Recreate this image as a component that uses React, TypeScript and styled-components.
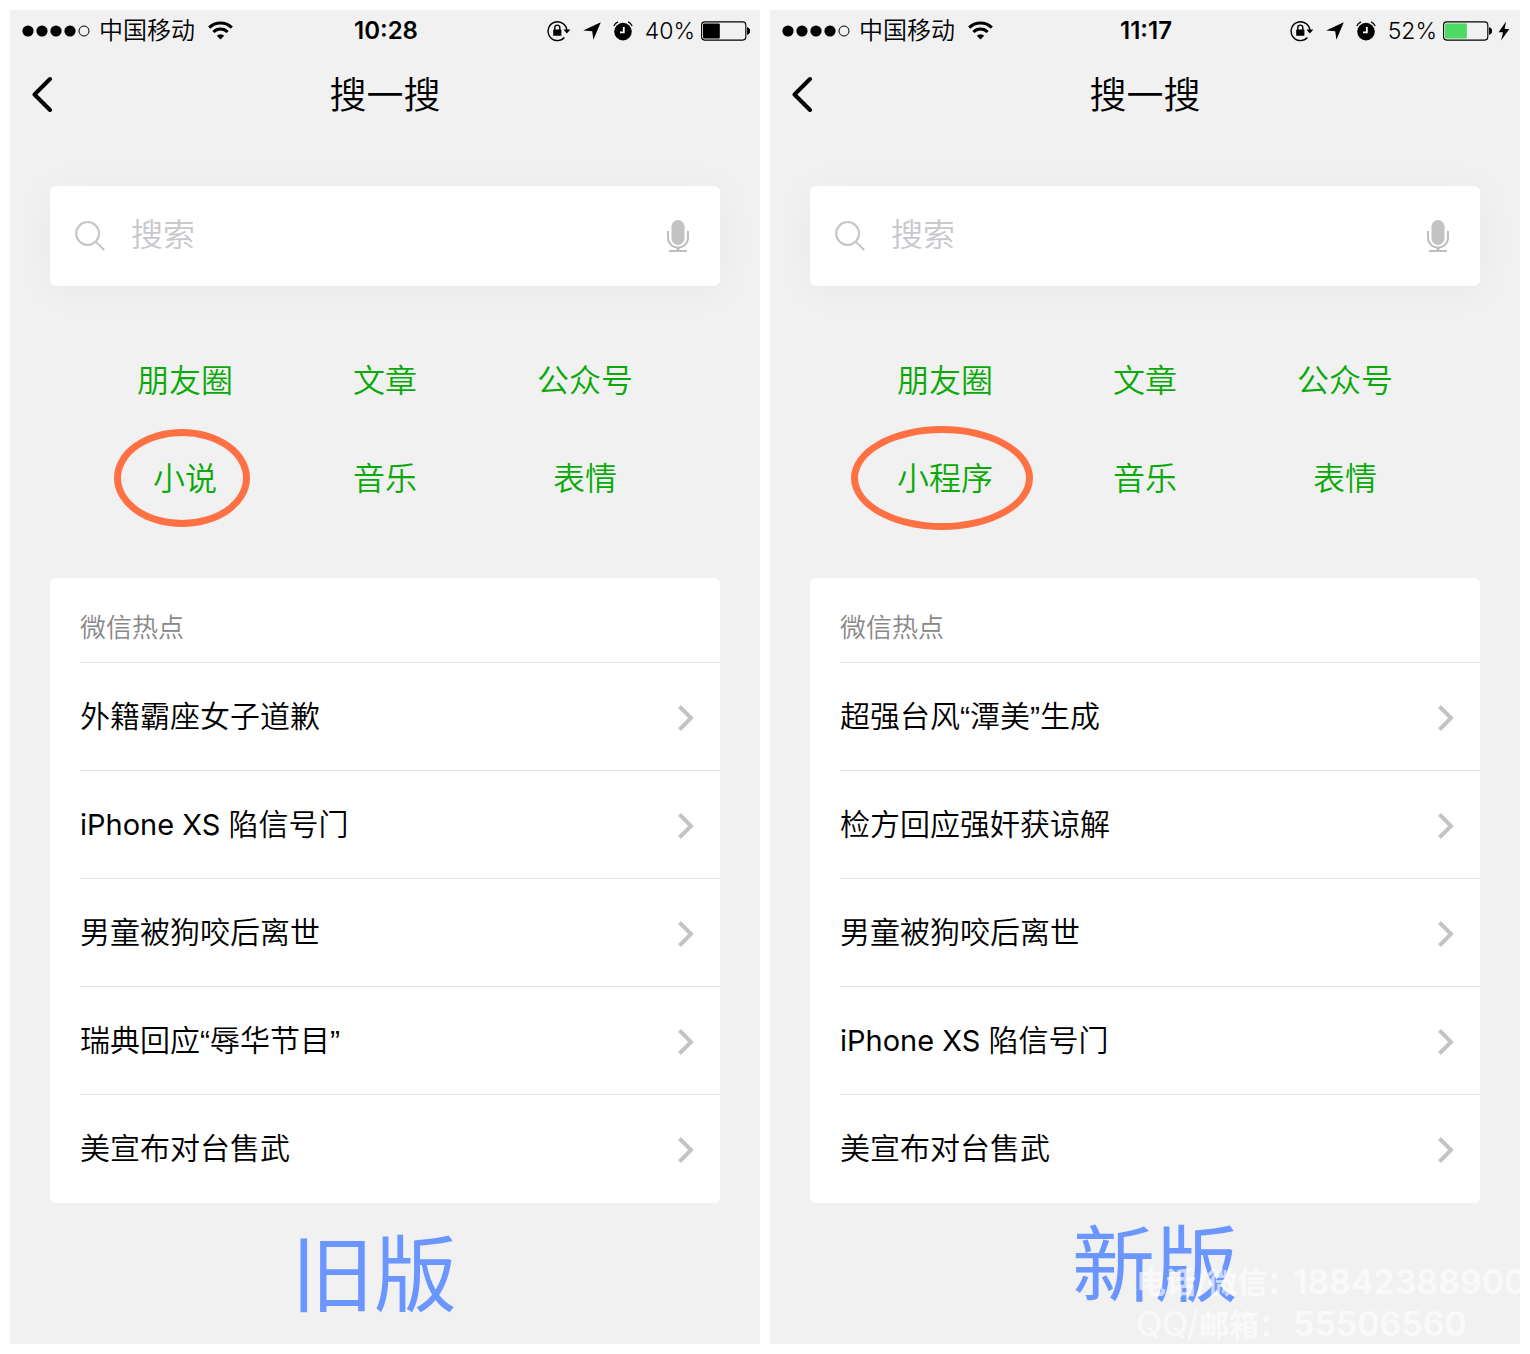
import React from "react";
import styled, { createGlobalStyle } from "styled-components";

const GlobalStyle = createGlobalStyle`
  *, *::before, *::after { box-sizing: border-box; }
  body {
    margin: 0;
    background: #fff;
    color: #000;
    font-family: Inter, "Noto Sans CJK SC", sans-serif;
    font-weight: 350;
  }
  a { color: inherit; text-decoration: none; }
  button { padding: 0; border: 0; background: none; font: inherit; color: inherit; cursor: pointer; }
  svg { display: block; flex: none; }
`;

const Page = styled.main`
  display: grid;
  grid-template-columns: 1fr 1fr;
  gap: 10px;
  min-height: 100vh;
  padding: 10px;
`;

const Phone = styled.section`
  position: relative;
  display: flex;
  flex-direction: column;
  min-width: 0;
  overflow: hidden;
  background: #f1f1f1;
`;

const StatusBar = styled.div`
  display: grid;
  grid-template-columns: 1fr auto 1fr;
  align-items: center;
  height: 40px;
  padding: 2px 10px 0 12px;
  font-size: 24px;
  line-height: 36px;
`;

const StatusLeft = styled.div`
  display: flex;
  align-items: center;
`;

const Carrier = styled.span`
  margin: 0 13px 0 9px;
`;

const Clock = styled.time`
  font-weight: 600;
  font-size: 24px;
`;

const StatusRight = styled.div`
  display: flex;
  align-items: center;
  justify-content: flex-end;
  gap: 12px;
`;

const Power = styled.div`
  display: flex;
  align-items: center;
  gap: 6px;
  font-size: 23px;
`;

const NavBar = styled.header`
  display: grid;
  grid-template-columns: 64px 1fr 64px;
  align-items: center;
  height: 88px;
`;

const BackButton = styled.button`
  display: flex;
  align-items: center;
  height: 88px;
  padding-left: 20px;
`;

const Title = styled.h1`
  margin: 0;
  padding-top: 4px;
  font-size: 37px;
  line-height: 48px;
  font-weight: inherit;
  text-align: center;
`;

const SearchBox = styled.form`
  display: flex;
  align-items: center;
  height: 100px;
  margin: 48px 40px 0;
  padding: 0 30px 0 25px;
  border-radius: 6px;
  background: #fff;
  box-shadow: 0 4px 40px rgba(0, 0, 0, 0.04);
`;

const SearchLabel = styled.label`
  display: flex;
  flex: 1;
  align-items: center;
  gap: 25px;
  min-width: 0;
`;

const SearchInput = styled.input`
  flex: 1;
  min-width: 0;
  height: 48px;
  padding: 0 0 3px;
  border: 0;
  outline: 0;
  background: none;
  font: inherit;
  font-size: 32px;
  &::placeholder { color: #c7c7cc; opacity: 1; }
`;

const Categories = styled.nav`
  display: grid;
  grid-template-columns: repeat(3, 1fr);
  grid-auto-rows: 98px;
  margin: 45px 75px 51px;
`;

const Category = styled.a`
  position: relative;
  display: flex;
  align-items: center;
  justify-content: center;
  padding-top: 2px;
  color: #09a909;
  font-size: 32px;
  line-height: 48px;
`;

const Ring = styled.span<{ $width: number; $height: number }>`
  position: absolute;
  top: 50%;
  left: calc(50% - 3px);
  width: ${(p) => p.$width}px;
  height: ${(p) => p.$height}px;
  border: 7px solid #ff7043;
  border-radius: 50%;
  transform: translate(-50%, -50%);
`;

const Card = styled.section`
  margin: 0 40px;
  padding: 0 0 1px 30px;
  border-radius: 6px;
  background: #fff;
`;

const CardTitle = styled.h2`
  margin: 0;
  padding: 30px 0 14px;
  color: #888;
  font-size: 26px;
  line-height: 40px;
  font-weight: inherit;
`;

const TopicList = styled.ul`
  margin: 0;
  padding: 0;
  list-style: none;
`;

const Topic = styled.li`
  border-top: 1px solid #e2e2e2;
`;

const TopicLink = styled.a`
  display: flex;
  align-items: center;
  justify-content: space-between;
  height: 107px;
  padding-right: 26px;
  font-family: "Liberation Sans", "Noto Sans CJK SC", sans-serif;
  font-size: 30px;
  line-height: 48px;
`;

const Latin = styled.span`
  font-family: Inter, sans-serif;
  font-size: 29px;
  font-weight: 400;
`;

const Caption = styled.p<{ $raised?: boolean }>`
  margin: 0;
  padding: ${(p) => (p.$raised ? "12px 0 0 20px" : "22px 22px 0 0")};
  color: #6b96ff;
  font-size: 83px;
  line-height: 100px;
  font-weight: 400;
  text-align: center;
`;

const Watermark = styled.div`
  position: absolute;
  left: 366px;
  bottom: -2px;
  display: grid;
  grid-template-columns: 157px auto;
  color: rgba(255, 255, 255, 0.65);
  font-size: 34px;
  font-weight: 600;
  line-height: 42px;
  white-space: nowrap;
`;

const WatermarkLabel = styled.span`
  font-size: 30px;
`;

const WatermarkLatin = styled.span`
  font-size: 34px;
  font-weight: 400;
`;

const SignalDots = () => (
  <svg width="68" height="12" viewBox="0 0 68 12" aria-hidden="true">
    {[6, 20, 34, 48].map((x) => (
      <circle key={x} cx={x} cy="6" r="5.6" />
    ))}
    <circle cx="62" cy="6" r="5" fill="none" stroke="#000" />
  </svg>
);

const WifiIcon = () => (
  <svg width="25" height="20" viewBox="0 0 25 20" fill="none" stroke="#000" strokeWidth="3" aria-hidden="true">
    <path d="M1.2 6.600a16 16 0 0 1 22.6 0" />
    <path d="M5.4 11a10 10 0 0 1 14.2 0" />
    <path d="M8.8 14.8a5.2 5.2 0 0 1 7.4 0L12.5 18.6Z" fill="#000" stroke="none" />
  </svg>
);

const RotationLockIcon = () => (
  <svg width="24" height="22" viewBox="0 0 24 22" fill="none" stroke="#000" aria-hidden="true">
    <path d="M17.4 17.6A9.4 9.4 0 1 1 19.9 10.5" strokeWidth="1.4" />
    <path d="M16.4 9.6h7l-3.5 4Z" fill="#000" stroke="none" />
    <rect x="6.2" y="9.4" width="8.2" height="6.4" rx="0.6" fill="#000" stroke="none" />
    <path d="M7.8 10V7.6a2.5 2.5 0 0 1 5 0V10" strokeWidth="1.4" />
  </svg>
);

const LocationIcon = () => (
  <svg width="18" height="18" viewBox="0 0 18 18" aria-hidden="true">
    <path d="M17.8 0.2 10.400 17.8 9.200 9.200 0.2 8.400Z" />
  </svg>
);

const AlarmIcon = () => (
  <svg width="20" height="20" viewBox="0 0 20 20" aria-hidden="true">
    <circle cx="10" cy="10.600" r="8.8" />
    <path d="M0.8 5A8 8 0 0 1 5 0.900M19.2 5A8 8 0 0 0 15 0.900" fill="none" stroke="#000" strokeWidth="1.2" />
    <path d="M10.8 6V11.4H7" fill="none" stroke="#fff" strokeWidth="1.8" />
  </svg>
);

const BatteryIcon = ({ level, color }: { level: number; color: string }) => (
  <svg width="49" height="20" viewBox="0 0 49 20" aria-hidden="true">
    <rect x="0.6" y="0.9" width="44.2" height="18.2" rx="3" fill="none" stroke="#000" strokeWidth="1.1" />
    <rect x="2" y="2.5" width={level * 0.42} height="15" rx="1" fill={color} />
    <path d="M46.4 6.6a3.6 3.6 0 0 1 0 6.8Z" stroke="#000" />
  </svg>
);

const BoltIcon = () => (
  <svg width="12" height="20" viewBox="0 0 12 20" aria-hidden="true">
    <path d="M8 0.600 0.6 11.200H5L3.2 19.200 11.400 8H6.6Z" />
  </svg>
);

const BackIcon = () => (
  <svg width="24" height="36" viewBox="0 0 24 36" fill="none" stroke="#000" strokeWidth="4" strokeLinecap="round" strokeLinejoin="round" aria-hidden="true">
    <path d="M20 3 4.500 18.500 20 34" />
  </svg>
);

const SearchIcon = () => (
  <svg width="31" height="30" viewBox="0 0 31 30" fill="none" stroke="#c4c4c6" strokeWidth="2" aria-hidden="true">
    <circle cx="12.600" cy="12.500" r="11.400" />
    <path d="m20.700 20.600 8.500 8.400" />
  </svg>
);

const MicIcon = () => (
  <svg width="24" height="34" viewBox="0 0 24 34" fill="none" stroke="#bfbfbf" strokeWidth="2" aria-hidden="true">
    <rect x="5.500" y="1" width="13" height="25" rx="6.500" fill="#c3c3c3" stroke="none" />
    <path d="M2 12v7a10 9.500 0 0 0 20 0v-7" />
    <path d="M12 28v4" strokeWidth="3" />
    <path d="M3 32h18" />
  </svg>
);

const ChevronIcon = () => (
  <svg width="17" height="28" viewBox="0 0 17 28" fill="none" stroke="#c4c4c6" strokeWidth="4" aria-hidden="true">
    <path d="M2.500 3.500 14 15 2.500 26.500" />
  </svg>
);

interface TopicItem {
  latin?: string;
  text: string;
}

interface Screen {
  id: string;
  time: string;
  battery: number;
  charging: boolean;
  categories: string[];
  highlight: { name: string; width: number; height: number };
  topics: TopicItem[];
  caption: string;
}

const screens: Screen[] = [
  {
    id: "old",
    time: "10:28",
    battery: 40,
    charging: false,
    categories: ["朋友圈", "文章", "公众号", "小说", "音乐", "表情"],
    highlight: { name: "小说", width: 136, height: 98 },
    topics: [
      { text: "外籍霸座女子道歉" },
      { latin: "iPhone XS ", text: "陷信号门" },
      { text: "男童被狗咬后离世" },
      { text: "瑞典回应“辱华节目”" },
      { text: "美宣布对台售武" },
    ],
    caption: "旧版",
  },
  {
    id: "new",
    time: "11:17",
    battery: 52,
    charging: true,
    categories: ["朋友圈", "文章", "公众号", "小程序", "音乐", "表情"],
    highlight: { name: "小程序", width: 182, height: 104 },
    topics: [
      { text: "超强台风“潭美”生成" },
      { text: "检方回应强奸获谅解" },
      { text: "男童被狗咬后离世" },
      { latin: "iPhone XS ", text: "陷信号门" },
      { text: "美宣布对台售武" },
    ],
    caption: "新版",
  },
];

const PhoneScreen = ({ screen }: { screen: Screen }) => (
  <Phone>
    <StatusBar>
      <StatusLeft>
        <SignalDots />
        <Carrier>中国移动</Carrier>
        <WifiIcon />
      </StatusLeft>
      <Clock>{screen.time}</Clock>
      <StatusRight>
        <RotationLockIcon />
        <LocationIcon />
        <AlarmIcon />
        <Power>
          <span>{screen.battery}%</span>
          <BatteryIcon level={screen.battery} color={screen.charging ? "#4cd964" : "#000"} />
          {screen.charging && <BoltIcon />}
        </Power>
      </StatusRight>
    </StatusBar>
    <NavBar>
      <BackButton type="button" aria-label="返回">
        <BackIcon />
      </BackButton>
      <Title>搜一搜</Title>
    </NavBar>
    <SearchBox role="search" onSubmit={(e) => e.preventDefault()}>
      <SearchLabel htmlFor={`search-${screen.id}`}>
        <SearchIcon />
        <SearchInput id={`search-${screen.id}`} type="text" placeholder="搜索" aria-label="搜索" />
      </SearchLabel>
      <button type="button" aria-label="语音搜索">
        <MicIcon />
      </button>
    </SearchBox>
    <Categories>
      {screen.categories.map((name) => (
        <Category key={name} href="#">
          {name}
          {name === screen.highlight.name && (
            <Ring $width={screen.highlight.width} $height={screen.highlight.height} />
          )}
        </Category>
      ))}
    </Categories>
    <Card>
      <CardTitle>微信热点</CardTitle>
      <TopicList>
        {screen.topics.map((topic) => (
          <Topic key={topic.text}>
            <TopicLink href="#">
              <span>
                {topic.latin && <Latin>{topic.latin}</Latin>}
                {topic.text}
              </span>
              <ChevronIcon />
            </TopicLink>
          </Topic>
        ))}
      </TopicList>
    </Card>
    <Caption $raised={screen.id === "new"}>{screen.caption}</Caption>
    {screen.id === "new" && (
      <Watermark>
        <WatermarkLabel>电话/微信：</WatermarkLabel>
        <span>18842388900</span>
        <WatermarkLabel>
          <WatermarkLatin>QQ/</WatermarkLatin>邮箱：
        </WatermarkLabel>
        <span>55506560</span>
      </Watermark>
    )}
  </Phone>
);

export default function App() {
  return (
    <>
      <GlobalStyle />
      <Page>
        {screens.map((screen) => (
          <PhoneScreen key={screen.id} screen={screen} />
        ))}
      </Page>
    </>
  );
}
